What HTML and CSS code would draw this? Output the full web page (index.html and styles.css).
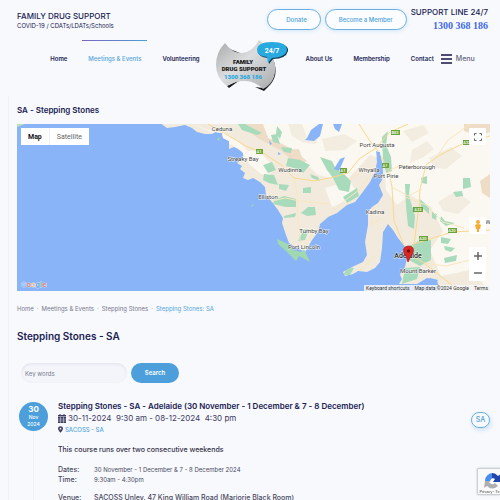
FILE: index.html
```html
<!DOCTYPE html>
<html lang="en">
<head>
<meta charset="utf-8">
<meta name="viewport" content="width=device-width, initial-scale=1">
<title>Stepping Stones - SA | Family Drug Support</title>
<link rel="stylesheet" href="styles.css">
</head>
<body>
<header class="site-header">
  <div class="topbar">
    <div class="brand">
      <strong class="brand-name">FAMILY DRUG SUPPORT</strong>
      <span class="brand-links">COVID-19 / CDATs/LDATs/Schools</span>
    </div>
    <div class="actions">
      <a class="pill pill-donate" href="#">Donate</a>
      <a class="pill" href="#">Become a Member</a>
    </div>
    <div class="support">
      <span class="support-label">SUPPORT LINE 24/7</span>
      <a class="support-phone" href="#">1300 368 186</a>
    </div>
  </div>
  <nav class="nav">
    <a href="#">Home</a>
    <a class="active" href="#">Meetings &amp; Events</a>
    <a href="#">Volunteering</a>
    <a class="logo" href="#">
      <svg viewBox="0 0 76 54" role="img" aria-label="Family Drug Support">
        <defs><linearGradient id="metal" x1="0" y1="0" x2="1" y2="1"><stop offset="0" stop-color="#a5a6a8"/><stop offset=".45" stop-color="#dcdddf"/><stop offset="1" stop-color="#a9aaac"/></linearGradient></defs>
        <path d="M10 5Q12 14 25 14L12 9ZM58 20Q65 37 53 48L49 52L40 48L48 49Q60 38 58 20ZM12 47L25 41L14 49Z" fill="#18191b"/>
        <path d="M10 4Q17 14 27 14Q38 13 44 1Q51 5 55 14Q63 26 59 38Q56 46 48 50Q40 42 30 42Q19 42 12 47Q1 39 1 26Q1 13 10 4Z" fill="url(#metal)"/>
        <path d="M43 12Q43 4 59 4Q74 5 73 12Q71 20 58 20L54 25L53 19Q43 18 43 12Z" fill="#143a50"/>
        <path d="M42 11Q42 3 57 3Q72 3 72 11Q71 18 57 19L53 24L52 18Q42 17 42 11Z" fill="#28a9df"/>
        <text class="logo-bubble" x="57" y="14">24/7</text>
        <text class="logo-text" x="28" y="25">FAMILY</text>
        <text class="logo-text" x="29" y="32">DRUG SUPPORT</text>
        <text class="logo-text logo-phone" x="28" y="40">1300 368 186</text>
      </svg>
    </a>
    <a href="#">About Us</a>
    <a href="#">Membership</a>
    <a href="#">Contact</a>
    <button class="menu" type="button"><span class="bars"></span>Menu</button>
  </nav>
</header>

<main>
  <h2 class="map-title">SA - Stepping Stones</h2>
  <section class="map" aria-label="Map">
    <svg class="map-art" viewBox="17 124 473 167" preserveAspectRatio="xMidYMid slice">
      <defs>
        <clipPath id="land"><path d="M160 123L167 128L175 127L185 125L192 128L197 132L205 134L212 134L215 132L222 133L223 138L229 141L229 149L234 147L238 149L243 153L243 158L237 163L242 166L240 169L245 173L243 178L248 180L253 178L260 182L265 187L266 195L272 202L278 210L283 218L282 223L286 235L289 243L297 248L305 252L308 247L312 240L318 232L320 224L328 217L337 213L347 205L355 202L362 193L370 182L375 172L377 162L376 151L380 152L382 162L383 172L382 180L379 185L383 195L378 203L372 207L368 212L368 225L365 242L367 255L363 262L352 267L343 272L345 276L353 274L358 271L367 272L375 268L380 262L382 248L383 232L388 224L393 230L398 238L406 248L407 258L405 267L400 275L402 279L399 284L417 284L427 278L437 280L440 292H491V123Z"/></clipPath>
      </defs>
      <rect x="17" y="124" width="473" height="167" fill="#8ab4f8"/>
      <path d="M17 124h8l-8 3Z" fill="#b9dfbb"/>
      <g clip-path="url(#land)">
        <rect x="150" y="120" width="345" height="175" fill="#f2ebdd"/>
        <g fill="#fbf8f1">
          <path d="M262 123H491V292L470 270L441 276L430 250L443 231L431 207L410 195L397 205L386 190L384 160L370 155L346 181L318 175L302 160L288 149L270 142Z"/>
          <path d="M192 124L214 132L222 131L240 143L248 151L258 150L272 165L270 177L261 174L250 165L241 150L228 143L216 134Z"/>
          <path d="M325 188L350 181L357 193L345 202L332 207Z"/>
        </g>
        <g fill="#eedcc7">
          <path d="M238 124H263L268 138L278 142L292 149L307 161L298 165L280 150L259 139Z"/>
          <path d="M283 150L299 149L303 160L290 158Z"/>
          <path d="M464 124H490V132L479 136L464 131Z"/><path d="M490 174L480 181L482 193L490 198Z"/>
        </g>
        <g fill="#f3ede1">
          <path d="M288 124H302L307 138L318 137L316 144L304 143L292 136Z"/>
          <path d="M412 150L427 141L434 149L424 157L410 163Z"/>
          <path d="M429 158L451 147L462 156L446 169L435 168Z"/>
          <path d="M438 202L456 191L471 202L458 214L443 211Z"/>
          <path d="M403 131L423 125L429 133L412 142Z"/><path d="M322 139L344 134L357 141L345 150L325 151Z"/>
        </g>
        <g fill="#a8dbbb">
          <path d="M238 124H245L262 133L257 135L242 130Z"/>
          <path d="M277 126L282 132L280 139L276 134Z"/>
          <path d="M271 135L277 134L280 144L273 142Z"/>
          <path d="M281 147L292 148L291 153L284 152Z"/>
          <path d="M288 158L300 160L310 165L303 173L294 168L286 166Z"/>
          <path d="M263 165L272 162L276 170L268 173Z"/>
          <path d="M264 174L274 175L278 185L269 183L263 180Z"/>
          <path d="M279 184L289 185L286 191L279 189Z"/>
          <path d="M303 188L311 187L311 193L303 193Z"/>
          <path d="M274 200L284 196L296 199L296 207L286 207L273 204Z"/>
          <path d="M301 213L308 207L315 207L316 215L307 216Z"/>
          <path d="M284 216L296 213L295 217L284 218Z"/>
          <path d="M298 241L304 229L309 229L305 240Z"/>
          <path d="M310 174L318 177L320 181L312 178Z"/>
          <path d="M320 157L332 161L336 169L344 174L351 181L349 192L339 190L333 178L327 170Z"/>
          <path d="M343 197L357 188L359 196L347 203Z"/>
          <path d="M382 137L388 131L386 145L391 157L392 171L386 173L383 160Z"/>
          <path d="M405 184L410 184L409 196L415 216L414 229L408 226L406 207Z"/>
          <path d="M421 178L427 176L427 184L422 183Z"/>
          <path d="M420 199L429 207L429 214L421 207Z"/>
          <path d="M409 246L419 241L431 240L431 260L420 266L409 260L407 253Z"/>
          <path d="M405 268L420 267L417 279L402 284Z"/>
          <path d="M463 178L470 178L471 187L463 189Z"/><path d="M453 192L462 191L463 196L456 197Z"/>
          <path d="M432 212L437 214L436 220L432 218Z"/><path d="M441 216L445 221L455 223L446 226L440 221Z"/>
          <path d="M441 237L451 239L448 244L441 243Z"/>
          <path d="M444 258L457 255L456 261L445 263Z"/><path d="M444 246L455 248L451 252L445 250Z"/>
          <path d="M343 275L348 267L354 268L350 275Z"/>
        </g>
        <g class="roads">
          <path d="M208 124L229 136L246 146L265 154L281 165L294 178L314 181L330 178L348 173L359 159L376 148L390 132L408 124"/>
          <path d="M359 124L370 141L378 151L388 168L392 187L394 221L407 253L424 263L443 278L460 291"/>
          <path d="M490 136L464 143L440 155L426 165L420 189L419 207L414 244L407 252M414 244L452 232L490 230"/>
        </g>
        <g class="roads minor">
          <path d="M269 202L285 198L300 201L330 204M294 178L297 194L298 224L301 247M303 246L321 224L339 205L359 190L369 177"/>
          <path d="M390 170L402 165L420 168M405 197L426 205L443 222L464 228M375 207L371 225L382 218M359 271L377 254M424 263L446 266L474 259M363 171L349 180M392 187L408 196L422 189M438 155L448 140L470 124"/>
        </g>
        <path d="M307 138L311 130L319 124H323L320 136L314 141L305 140ZM333 124H342L339 132L335 129ZM334 169L340 159L345 157L339 171ZM278 152L281 154L278 155ZM269 140L272 144L270 145Z" fill="#8ab4f8"/>
      </g>
      <path d="M277 239L288 244L293 250L301 252L304 249L310 262L299 256L296 261L287 252L278 244ZM311 260L318 265L314 262ZM251 206L255 203L252 207ZM217 139L220 137L219 141Z" fill="#9fd8b1"/>
      <path d="M424 283L430 278L438 280L435 284L440 291H423Z" fill="#8ab4f8"/>
      <g class="shields">
        <rect x="256" y="149" width="7" height="5"/><rect x="340" y="168" width="7" height="5"/><rect x="382" y="163" width="7" height="5"/><rect x="391" y="130" width="9" height="5"/><rect x="463" y="140" width="9" height="5"/><rect x="413" y="207" width="10" height="5"/><rect x="419" y="236" width="9" height="5"/><rect x="448" y="228" width="9" height="5"/>
      </g>
      <g class="shield-text"><text x="259" y="153">A1</text><text x="343" y="172">A1</text><text x="385" y="167">A1</text><text x="395" y="134">B83</text><text x="467" y="144">A32</text><text x="418" y="211">A32</text><text x="423" y="240">A20</text><text x="452" y="232">A20</text></g>
      <g class="places">
        <text x="222" y="131">Ceduna</text><text x="243" y="161">Streaky Bay</text><text x="290" y="172">Wudinna</text><text x="268" y="199">Elliston</text><text x="314" y="233">Tumby Bay</text><text x="304" y="249">Port Lincoln</text><text x="377" y="147">Port Augusta</text><text x="369" y="172">Whyalla</text><text x="386" y="178">Port Pirie</text><text x="417" y="169">Peterborough</text><text x="375" y="214">Kadina</text><text x="418" y="273">Mount Barker</text><text x="488" y="224">W</text>
        <text class="city" x="408" y="258">Adelaide</text>
      </g>
      <path d="M408 262Q407 257 404 253Q402 247 408 246Q415 246 413 253Q410 257 408 262Z" fill="#dc2724" stroke="#a51514" stroke-width=".7"/><circle cx="408.500" cy="251" r="1.700" fill="#76100f"/>
      <g class="google"><text x="21" y="287"><tspan fill="#8eb4ff">G</tspan><tspan fill="#ee7770">o</tspan><tspan fill="#f4d26c">o</tspan><tspan fill="#69a0f5">g</tspan><tspan fill="#65bd7f">l</tspan><tspan fill="#ee7770">e</tspan></text></g>
    </svg>
    <div class="map-types"><button class="selected" type="button">Map</button><button type="button">Satellite</button></div>
    <button class="map-control fullscreen" type="button" aria-label="Full screen"><svg viewBox="0 0 8 8"><path d="M.5 2.500V.5H2.500M5.500 .5H7.500V2.500M7.500 5.500V7.500H5.500M2.500 7.500H.5V5.500"/></svg></button>
    <div class="map-stack">
      <button class="map-control" type="button" aria-label="Street View"><svg class="person" viewBox="0 0 8 12"><circle cx="4" cy="2" r="2"/><path d="M1 5Q4 3 7 5L6 9L5 9L5 12H3L3 9L2 9Z"/></svg></button>
      <div class="zoom"><button class="map-control" type="button" aria-label="Zoom in"><svg viewBox="0 0 8 8"><path d="M4 0V8M0 4H8"/></svg></button><button class="map-control" type="button" aria-label="Zoom out"><svg viewBox="0 0 8 8"><path d="M0 4H8"/></svg></button></div>
    </div>
    <div class="map-credit"><span>Keyboard shortcuts</span><span>Map data ©2024 Google</span><span>Terms</span></div>
  </section>

  <nav class="crumbs" aria-label="Breadcrumb"><a href="#">Home</a><i>·</i><a href="#">Meetings &amp; Events</a><i>·</i><a href="#">Stepping Stones</a><i>·</i><span class="current">Stepping Stones: SA</span></nav>
  <h1>Stepping Stones - SA</h1>
  <form class="search">
    <input type="text" placeholder="Key words" aria-label="Key words">
    <button type="button">Search</button>
  </form>

  <article class="event">
    <div class="timeline"><time class="date-badge" datetime="2024-11-30"><b>30</b><span>Nov</span><span>2024</span></time></div>
    <div class="event-body">
      <h3>Stepping Stones - SA - Adelaide (30 November - 1 December &amp; 7 - 8 December)</h3>
      <p class="when"><svg viewBox="0 0 8 9"><path d="M0 1H1.500V0H2.500V1H5.500V0H6.500V1H8V2.500H0ZM0 3H8V9H0Z"/><path class="grid" d="M0 5H8M0 7H8M2.500 3V9M5.500 3V9"/></svg>30-11-2024&nbsp; 9:30 am - 08-12-2024&nbsp; 4:30 pm</p>
      <p class="where"><svg viewBox="0 0 6 8"><path fill-rule="evenodd" d="M3 8Q0 4 0 3A3 3 0 0 1 6 3Q6 4 3 8ZM3 2A1 1 0 1 0 3 4A1 1 0 1 0 3 2Z"/></svg><a href="#">SACOSS - SA</a></p>
      <p class="note">This course runs over two consecutive weekends</p>
      <dl>
        <dt>Dates:</dt><dd>30 November - 1 December &amp; 7 - 8 December 2024</dd>
        <dt>Time:</dt><dd>9:30am - 4:30pm</dd>
        <dt class="venue">Venue:</dt><dd class="venue">SACOSS Unley, 47 King William Road (Marjorie Black Room)</dd>
      </dl>
    </div>
    <a class="region" href="#">SA</a>
  </article>
</main>
<aside class="captcha">
  <svg viewBox="0 0 18 16"><path d="M1 8A8 8 0 0 1 9 0V5A4 4 0 0 0 6 8Z" fill="#4a8cf0"/><path d="M8 0A8 8 0 0 1 14 3L17 1V9H9L11 6Q10 5 8 5Z" fill="#2145ab"/><path d="M1 8L7 8L5 9Q8 13 11 10L14 13Q8 18 3 13L0 15Z" fill="#adafb3"/></svg>
  <span>Privacy - Terms</span>
</aside>
</body>
</html>
```
FILE: styles.css
```css
* { box-sizing: border-box; }
body {
  margin: 0;
  height: 100vh;
  overflow: hidden;
  background: #f7f9fd;
  color: #211c52;
  font: 500 7px/10px Inter, "Open Sans", sans-serif;
}
a { color: inherit; text-decoration: none; }
button, input { font: inherit; color: inherit; border: 0; padding: 0; }
h1, h2, h3, p, dl, dd { margin: 0; }

.topbar { display: flex; align-items: flex-start; padding: 7px 12px 0 17px; }
.brand { display: flex; flex-direction: column; flex: 1; padding-top: 4px; }
.brand-name { font-size: 8px; font-weight: 500; }
.brand-links { font-size: 6px; font-weight: 400; }
.actions { display: flex; gap: 4px; padding-top: 2px; }
.pill {
  display: flex; align-items: center; justify-content: center;
  height: 21px; padding: 0 13px;
  border: 1px solid #6aaee2; border-radius: 11px;
  color: #4c9fda; background: #fafcff;
  box-shadow: 0 1px 4px #4c9fda33;
  font-size: 6px;
}
.pill-donate { padding: 0 13px 0 18px; }
.support { display: flex; flex-direction: column; align-items: flex-end; padding-left: 4px; }
.support-label { font-size: 8px; font-weight: 500; }
.support-phone { margin-top: 3px; color: #4169e8; font: bold 10px/12px "Liberation Serif", serif; }

.nav { display: flex; align-items: center; justify-content: center; gap: 21px; height: 54px; padding: 0 0 0 25px; font-size: 6px; font-weight: 600; white-space: nowrap; }
.nav .active { position: relative; color: #55a5dd; font-weight: 500; }
.nav .active::before { content: ""; position: absolute; top: -14px; left: -6px; right: -6px; height: 1px; background: linear-gradient(90deg, #7d62be, #4c9fda); }
.logo { margin: 14px -6px 0; }
.logo svg { display: block; width: 76px; height: 54px; }
.logo-text { font: 900 6px Roboto, sans-serif; text-anchor: middle; fill: #111; }
.logo-phone { fill: #28a9df; }
.logo-bubble { font: bold 7px Roboto, sans-serif; text-anchor: middle; fill: #fff; }
.menu { display: flex; align-items: center; gap: 4px; margin-left: -14px; background: none; color: #62627c; font-size: 7px; font-weight: 500; }
.bars { width: 11px; height: 10px; border-top: 2px solid #4e4c70; border-bottom: 2px solid #4e4c70; background: linear-gradient(#4e4c70, #4e4c70) center / 100% 2px no-repeat; }

main { margin: 10px 0 0 8px; padding: 8px 10px 0 8px; border-left: 1px solid #eff2f8; }
.map-title { font-size: 8px; line-height: 12px; font-weight: 600; }
.map { position: relative; height: 167px; margin-top: 8px; overflow: hidden; font-family: Roboto, sans-serif; }
.map-art { display: block; width: 100%; height: 100%; }
.roads { fill: none; stroke: #f7d88e; stroke-width: 1; }
.minor { stroke: #f8e6bd; }
.places { font: 400 6px Roboto, sans-serif; text-anchor: middle; fill: #444; paint-order: stroke; stroke: #fffc; stroke-width: 1px; }
.places .city { font-size: 7px; font-weight: 500; fill: #222; }
.shields { fill: #6da33e; }
.shield-text { font: bold 4px Roboto, sans-serif; fill: #e9f5dc; text-anchor: middle; }
.google { font: 500 8px Roboto, sans-serif; paint-order: stroke; stroke: #fff8; stroke-width: 1px; }
.map-types { position: absolute; top: 4px; left: 4px; display: flex; background: #fff; }
.map-types button { height: 17px; padding: 0 7px; background: none; color: #666; font-size: 7px; font-weight: 400; }
.map-types .selected { color: #111; font-weight: 700; border-right: 1px solid #eee; }
.map-control { display: flex; align-items: center; justify-content: center; width: 17px; height: 17px; background: #fff; border-radius: 1px; }
.map-control svg { width: 8px; height: 8px; fill: none; stroke: #666; stroke-width: 1.5; }
.fullscreen svg { stroke-width: 1; }
.map-control .person { height: 12px; fill: #f4ad32; stroke: none; }
.map .fullscreen { position: absolute; top: 4px; right: 4px; }
.map-stack { position: absolute; right: 4px; bottom: 10px; display: grid; gap: 13px; }
.zoom { background: #fff; }
.map-credit { position: absolute; right: 0; bottom: 0; display: flex; gap: 5px; padding: 0 2px; background: #f5f5f5dd; color: #333; font-size: 5px; font-weight: 400; line-height: 6px; }

.crumbs { display: flex; gap: 3px; margin-top: 13px; color: #77778d; font-size: 6px; font-weight: 400; }
.crumbs i { font-style: normal; }
.current { color: #55a5dd; }
h1 { margin-top: 15px; font-size: 10px; line-height: 14px; font-weight: 600; }
.search { display: flex; gap: 4px; margin: 20px 0 0 4px; }
.search input { width: 106px; height: 20px; padding: 0 4px; border-radius: 10px; background: #f3f5fa; box-shadow: inset 0 1px 3px #20306018; font-size: 6px; font-weight: 400; }
.search input::placeholder { color: #777a8c; opacity: 1; }
.search button { width: 48px; height: 20px; border-radius: 10px; background: #4c9fda; color: #fff; font-size: 6px; font-weight: 600; }

.event { display: flex; align-items: flex-start; margin-top: 17px; }
.timeline { display: flex; flex-direction: column; align-items: center; align-self: stretch; width: 33px; padding-top: 2px; }
.timeline::after { content: ""; flex: 1; width: 1px; background: #edf0f6; }
.date-badge { display: flex; flex-direction: column; align-items: center; justify-content: center; width: 29px; height: 29px; border-radius: 50%; background: #4c9fda; color: #fff; font-size: 5px; line-height: 7px; }
.date-badge b { font-size: 8px; line-height: 9px; }
.event-body { flex: 1; padding-left: 8px; white-space: nowrap; }
h3 { font-size: 8px; line-height: 12px; font-weight: 600; }
.when { display: flex; align-items: center; gap: 2px; font-size: 8px; line-height: 12px; font-weight: 400; color: #3f3b63; }
.when svg { width: 8px; height: 9px; fill: #3f3b63; }
.grid { stroke: #dfe2ed; stroke-width: .5; }
.where { display: flex; align-items: center; gap: 2px; line-height: 11px; color: #55a5dd; font-size: 6px; }
.where svg { width: 5px; height: 7px; fill: #3f3b63; }
.note { margin-top: 10px; color: #333046; font-weight: 500; }
dl { display: grid; grid-template-columns: 36px 1fr; margin-top: 10px; color: #4a4a60; }
dt { font-weight: 500; }
dd { font-size: 6px; font-weight: 400; }
.venue { margin-top: 8px; font-size: 7px; font-weight: 500; }
.region { display: flex; align-items: center; justify-content: center; width: 19px; height: 16px; margin-top: 12px; border: 1px solid #6aaee2; border-radius: 8px; color: #4c9fda; box-shadow: 1px 2px 4px #4c9fda44; }

.captcha { position: fixed; left: calc(100% - 23px); bottom: 5px; display: flex; flex-direction: column; align-items: center; width: 32px; height: 27px; padding-top: 4px; border: 1px solid #ccd0d6; border-radius: 2px; background: #fafafa; box-shadow: 0 0 2px #bbb; }
.captcha svg { width: 18px; height: 16px; }
.captcha span { color: #555; font: 400 4px/5px Roboto, sans-serif; white-space: nowrap; }
```
